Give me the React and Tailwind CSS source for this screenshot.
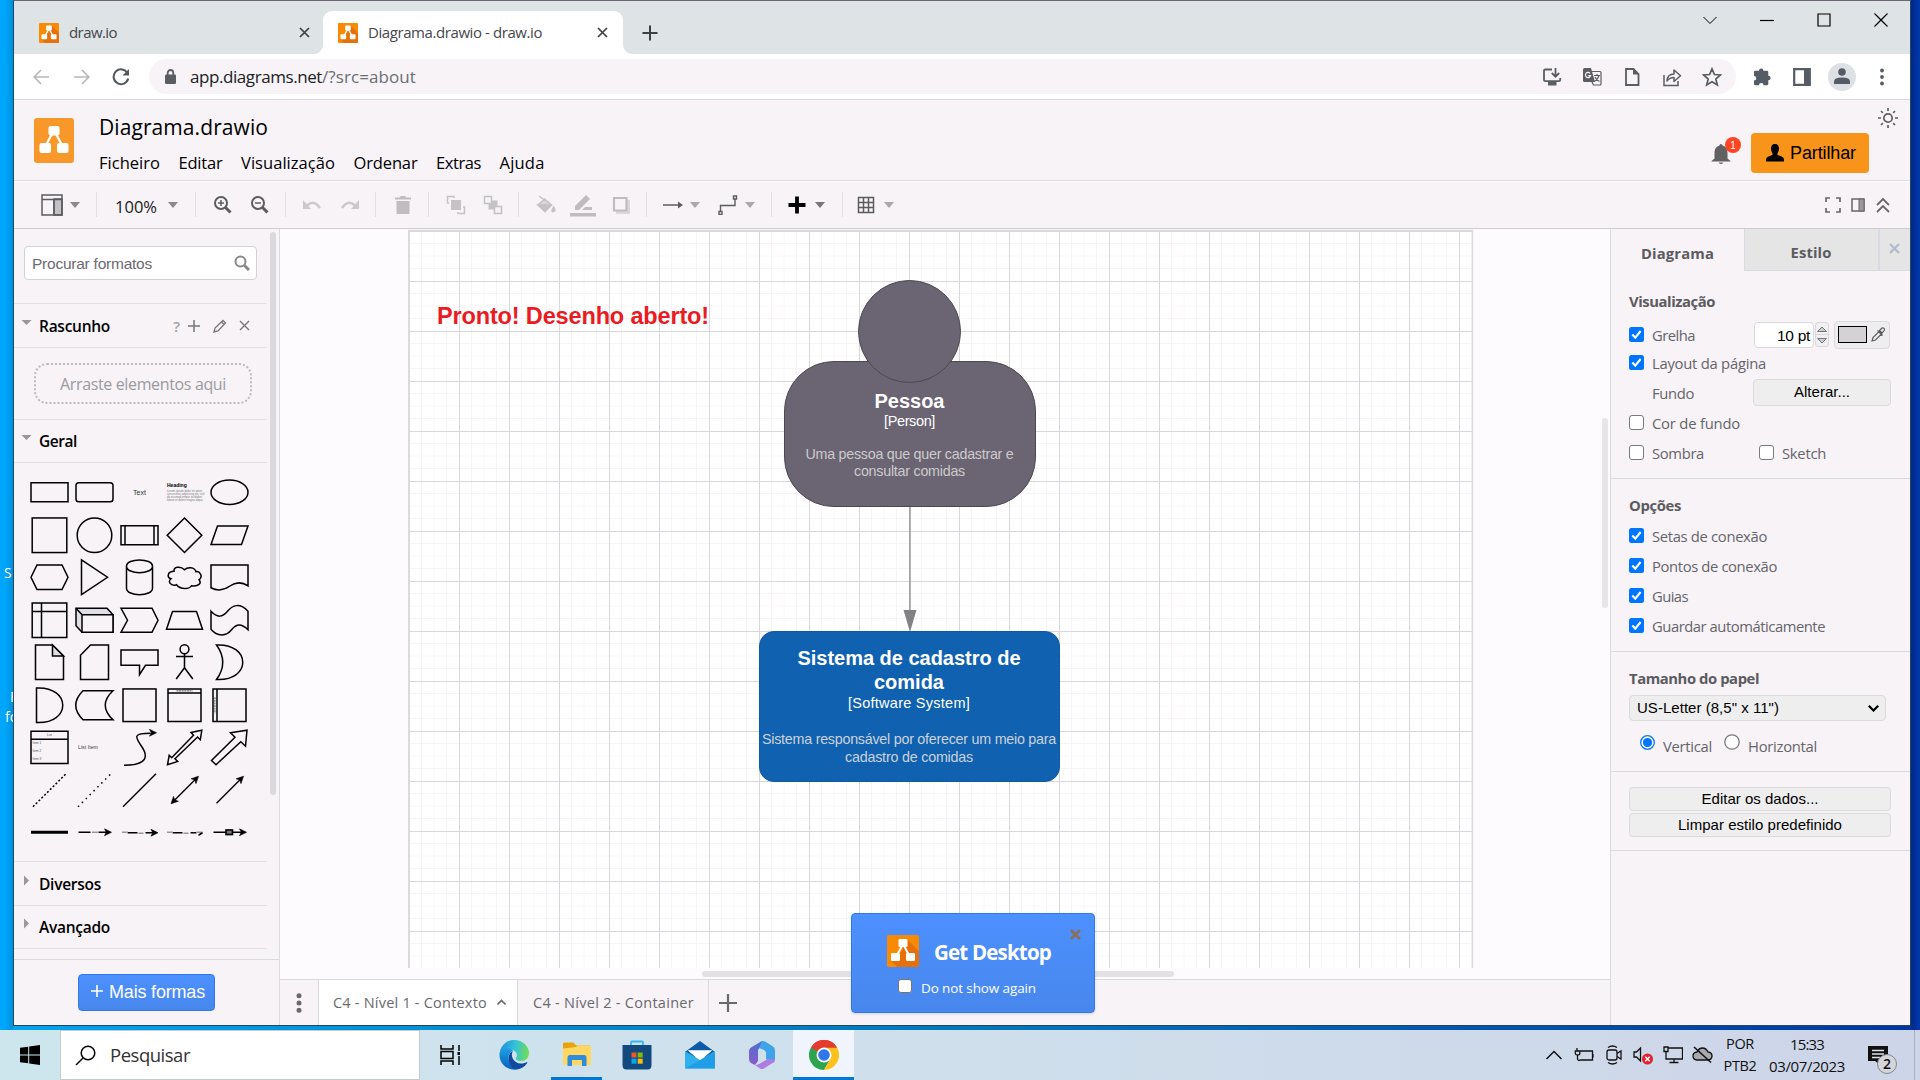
import React, { useLayoutEffect, useRef, useState } from "react";

const UI = "font-['Open_Sans','Noto_Sans',sans-serif]";
const ARIAL = "font-['Liberation_Sans',Arial,sans-serif]";

/* Single-line label whose tracking is adjusted so that it fills a width. */
function Fit({ w, className = "", children }) {
  const ref = useRef(null);
  const [track, setTrack] = useState(0);
  useLayoutEffect(() => {
    const text = ref.current;
    const natural = text.getBoundingClientRect().width - track * children.length;
    setTrack((w - natural) / children.length);
  }, [w, children]);
  return (
    <span className={`block shrink-0 whitespace-nowrap ${className}`} style={{ width: w }}>
      <span ref={ref} style={{ letterSpacing: track }}>{children}</span>
    </span>
  );
}

function Ic({ w = 20, h = 20, className = "", sw = 1.5, children, box }) {
  return (
    <svg width={w} height={h} viewBox={box || `0 0 ${w} ${h}`} fill="none" stroke="currentColor" strokeWidth={sw} className={`block shrink-0 ${className}`}>
      {children}
    </svg>
  );
}

const Caret = ({ className = "" }) => (
  <svg width="10" height="6" viewBox="0 0 10 6" className={`block shrink-0 ${className}`}>
    <path d="M0 0h10l-5 6z" fill="currentColor" />
  </svg>
);

const Sep = ({ className = "" }) => <div className={`h-[25px] w-px shrink-0 bg-[#e2e0e4] ${className}`} />;

function DrawioMark({ size = 20, h, flat = false, className = "" }) {
  return (
    <svg width={size} height={h || size} viewBox={flat ? "0 0 40 45" : "0 0 32 32"} className={`block shrink-0 ${className}`}>
      {flat ? (
        <g>
          <rect width="40" height="45" rx="3" fill="#f9982a" />
          <path d="M20 12L11 29M20 12l9 17" stroke="#fff" strokeWidth="2.2" />
          <rect x="14.5" y="8" width="11" height="9.5" rx="2" fill="#fff" />
          <rect x="5.5" y="25" width="11.5" height="10" rx="2" fill="#fff" />
          <rect x="23" y="25" width="11.5" height="10" rx="2" fill="#fff" />
        </g>
      ) : (
        <g>
          <rect width="32" height="32" rx="1.5" fill="#f98b04" />
          <path d="M21 5l11 11v14.500q0 1.500-1.500 1.500H10l-6-6 9-8z" fill="#e6700a" />
          <path d="M16 9L9 22M16 9l7 13" stroke="#fff" strokeWidth="2" />
          <rect x="11.500" y="4" width="9" height="8" rx="1.300" fill="#fff" />
          <rect x="4" y="18" width="9" height="8" rx="1.300" fill="#fff" />
          <rect x="19" y="18" width="9" height="8" rx="1.300" fill="#fff" />
        </g>
      )}
    </svg>
  );
}

const XIcon = ({ s = 11, sw = 1.7, className = "" }) => (
  <Ic w={s} h={s} sw={sw} box="0 0 11 11" className={className}><path d="M1 1l9 9M10 1l-9 9" /></Ic>
);

/* ---------- browser chrome ---------- */

function TabStrip() {
  return (
    <div className={`flex h-[53px] shrink-0 bg-[#dee3e6] ${UI}`}>
      <div className="mt-[10px] flex h-[43px] w-[309px] items-center">
        <DrawioMark className="ml-[25px]" />
        <Fit w={48} className="ml-[10px] text-[15px] text-[#45484c]">draw.io</Fit>
        <XIcon className="ml-auto mr-[13px] text-[#3c4043]" />
      </div>
      <div className="relative mt-[10px] flex h-[43px] w-[300px] items-center rounded-t-[9px] bg-white">
        <svg width="9" height="9" className="absolute -left-[9px] bottom-0"><path d="M9 0v9H0a9 9 0 0 0 9-9z" fill="#fff" /></svg>
        <svg width="9" height="9" className="absolute -right-[9px] bottom-0"><path d="M0 0v9h9a9 9 0 0 1-9-9z" fill="#fff" /></svg>
        <DrawioMark className="ml-[15px]" />
        <Fit w={174} className="ml-[10px] text-[15px] text-[#45484c]">Diagrama.drawio - draw.io</Fit>
        <XIcon className="ml-auto mr-[15px] text-[#3c4043]" />
      </div>
      <Ic w={16} h={16} sw={2} className="ml-[19px] mt-[24px] text-[#3c4043]"><path d="M8 .5v15M.5 8h15" /></Ic>
      <div className="ml-auto flex h-[37px] items-center pr-[22px] text-black">
        <Ic w={14} h={14} sw={1}><path d="M.5 4l6.500 6.500L13.500 4" /></Ic>
        <Ic w={14} h={14} sw={1.2} className="ml-[43px]"><path d="M0 7.500h14" /></Ic>
        <Ic w={14} h={14} sw={1.2} className="ml-[43px]"><path d="M1 1h12v12H1z" /></Ic>
        <Ic w={14} h={14} sw={1.2} className="ml-[43px]"><path d="M.5.5l13 13M13.500.5l-13 13" /></Ic>
      </div>
    </div>
  );
}

function AddressBar() {
  return (
    <div className={`flex h-[46px] shrink-0 items-center border-b border-[#d9dade] bg-white ${UI}`}>
      <Ic w={16} h={16} sw={1.700} className="ml-[19px] text-[#b6b8bb]"><path d="M16 8H1.500M8 1L1.200 8 8 15" /></Ic>
      <Ic w={16} h={16} sw={1.700} className="ml-[25px] text-[#b6b8bb]"><path d="M0 8h14.500M8 1l6.800 7L8 15" /></Ic>
      <Ic w={18} h={18} sw={2} className="ml-[22px] text-[#54585d]"><path d="M15.500 5.200A7.400 7.400 0 1 0 16.200 10.500" /><path d="M17 1v6.500h-6.500z" fill="currentColor" stroke="none" /></Ic>
      <div className="ml-[19px] flex h-[35px] w-[1587px] shrink-0 items-center rounded-full bg-[#f7f3f7] text-[#5a5d62]">
        <Ic w={11} h={15} sw={1.800} className="ml-[16px]"><rect x="0" y="5.500" width="11" height="9.500" rx="1.300" fill="currentColor" stroke="none" /><path d="M2.700 6V4a2.800 3 0 0 1 5.600 0v2" /></Ic>
        <div className="ml-[14px] flex pb-px pt-px text-[17px]">
          <Fit w={132} className="text-[#202124]">app.diagrams.net</Fit>
          <Fit w={94} className="text-[#6b6e73]">/?src=about</Fit>
        </div>
        <div className="ml-auto flex items-center gap-[20px] pr-[14px]">
          <Ic w={20} h={20} sw={1.800}><path d="M10 2.500H3.200Q2 2.500 2 3.700V13q0 1.200 1.200 1.200H17q1.200 0 1.200-1.200v-2M13.500 1v8M9.800 6l3.700 3.700L17.200 6" /><path d="M6 15h8.500v3.500H6z" fill="currentColor" stroke="none" /></Ic>
          <Ic w={20} h={20} sw={1.200}>
            <path d="M2.500 1H9l4 14H2.500Q1 15 1 13.500v-11Q1 1 2.500 1z" fill="currentColor" stroke="none" />
            <path d="M9.800 4.500h8.200q1 0 1 1V17q0 1-1 1h-6.500l-1.500-3" />
            <path d="M12 8.500h6M15 7v1.500M17 8.500q-1 4-4.500 6M13 10q1.500 3.500 4.500 4.500" />
            <path d="M8 6.300A2.600 2.600 0 1 0 8.600 8.600H6.300" stroke="#f7f3f7" />
          </Ic>
          <Ic w={20} h={20} sw={1.800}><path d="M4 2h7.500L16.500 7v11H4z" /><path d="M11 2v5.500h5.500z" fill="currentColor" stroke="none" /></Ic>
          <Ic w={20} h={20} sw={1.500}><path d="M2 8v10.500h14V14" /><path d="M5 14c.3-5 3-7 7-7V3l6.500 5.800L12 14.500v-4c-3 0-5 .8-7 3.500z" strokeLinejoin="round" /></Ic>
          <Ic w={20} h={20} sw={1.700}><path d="M10 1.800l2.400 5.700 6.100.5-4.700 4 1.500 6L10 14.700 4.700 18l1.500-6-4.700-4 6.100-.5z" /></Ic>
        </div>
      </div>
      <div className="ml-[16px] flex items-center text-[#565c66]">
        <svg width="20" height="20" viewBox="0 0 20 20" className="block"><path d="M7 3.800a2.200 2.200 0 0 1 4.400 0H15q1.300 0 1.300 1.300v3.600a2.300 2.300 0 0 1 0 4.600V17q0 1.300-1.300 1.300h-3.400a2.300 2.300 0 0 0-4.600 0H3.200Q2 18.300 2 17v-3.400a2.300 2.300 0 0 0 0-4.600V5.100q0-1.300 1.300-1.300z" fill="currentColor" /></svg>
        <Ic w={18} h={18} sw={2.200} className="ml-[21px]"><path d="M1.200 1.200h15.600v15.600H1.200z" /><path d="M11 1h6v16h-6z" fill="currentColor" stroke="none" /></Ic>
        <div className="ml-[17px] flex size-[28px] items-center justify-center rounded-full bg-[#dde1e6]">
          <svg width="16" height="17" className="block"><circle cx="8" cy="4" r="3.800" fill="currentColor" /><path d="M0 16v-2.500q0-4 8-4t8 4V16z" fill="currentColor" /></svg>
        </div>
        <svg width="4" height="18" className="ml-[24px] block"><g fill="currentColor"><circle cx="2" cy="2.500" r="1.900" /><circle cx="2" cy="9" r="1.900" /><circle cx="2" cy="15.500" r="1.900" /></g></svg>
      </div>
    </div>
  );
}

/* ---------- editor header ---------- */

const MENUS = [["Ficheiro", 61], ["Editar", 44], ["Visualização", 94], ["Ordenar", 64], ["Extras", 45], ["Ajuda", 45]];

function EditorHeader() {
  return (
    <div className={`flex h-[82px] shrink-0 border-b border-white shadow-[inset_0_-1px_0_#dadce6] ${UI}`}>
      <DrawioMark flat size={40} h={45} className="ml-[20px] mt-[18px]" />
      <div className="ml-[25px] text-black">
        <Fit w={169} className="mt-[12px] h-[30px] text-[21px] leading-[30px]">Diagrama.drawio</Fit>
        <div className="mt-[8px] flex gap-[18.500px] text-[16.500px] leading-[26px]">
          {MENUS.map(([m, w]) => <Fit key={m} w={w}>{m}</Fit>)}
        </div>
      </div>
      <div className="relative ml-auto mt-[44px] h-[22px] w-[20px]">
        <svg width="20" height="20" viewBox="0 0 20 20" className="block text-[#616161]"><path d="M10 0a1.500 1.500 0 0 1 1.500 1.500Q16.500 3 16.500 8.500v6L19.500 17v.6H.5V17l3-2.500v-6Q3.500 3 8.500 1.500A1.500 1.500 0 0 1 10 0zM7.800 18.500h4.400a2.200 1.500 0 0 1-4.400 0z" fill="currentColor" /></svg>
        <span className={`absolute -top-[7px] left-[14px] flex size-4 items-center justify-center rounded-full bg-[#ff4423] text-[10px] text-white ${ARIAL}`}>1</span>
      </div>
      <button className={`ml-[20px] mt-[33px] flex h-[40px] w-[118px] items-center rounded-[4px] bg-[#f89419] text-black ${ARIAL}`}>
        <svg width="18" height="18" viewBox="0 0 18 18" className="ml-[15px] block"><path d="M9 0c2.800 0 4 2 4 4.500S11.700 9 11.300 10c0 1.200 1.500 1.500 3.700 2.300S18 14 18 16v1.500H0V16c0-2 .8-2.900 3-3.700S6.700 11.200 6.700 10C6.300 9 5 7 5 4.500S6.200 0 9 0z" /></svg>
        <Fit w={66} className="ml-[6px] mt-px text-[18px]">Partilhar</Fit>
      </button>
      <Ic w={22} h={22} sw={1.700} className="ml-[8px] mr-[11px] mt-[7px] text-[#5f5f63]">
        <circle cx="11" cy="11" r="4.200" />
        <path d="M11 1v3M11 18v3M1 11h3M18 11h3M4 4l1.800 1.800M16.200 16.200L18 18M18 4l-1.800 1.800M5.800 16.200L4 18" />
      </Ic>
    </div>
  );
}

function Toolbar() {
  return (
    <div className={`flex h-[47px] shrink-0 items-center border-b border-[#cfcdd2] pb-px text-[#5c5c60] ${UI}`}>
      <Ic w={22} h={24} sw={1.500} className="ml-[27px]"><path d="M13 6h8v16h-8z" fill="#c2c1c5" /><path d="M1 2h20v20H1zM1 6.500h20M13 6.500V22" /></Ic>
      <Caret className="ml-[7px] text-[#8a898d]" />
      <Sep className="ml-[16px]" />
      <Fit w={42} className="ml-[18px] mt-[5px] text-[16.500px] text-[#1a1a1a]">100%</Fit>
      <Caret className="ml-[11px] text-[#8a898d]" />
      <Sep className="ml-[17px]" />
      <Ic sw={2} className="ml-[17px]"><circle cx="8" cy="8" r="6" /><path d="M12.500 12.500l5 5" strokeWidth="3" /><path d="M8 5v6M5 8h6" strokeWidth="1.500" /></Ic>
      <Ic sw={2} className="ml-[17px]"><circle cx="8" cy="8" r="6" /><path d="M12.500 12.500l5 5" strokeWidth="3" /><path d="M5 8h6" strokeWidth="1.500" /></Ic>
      <Sep className="ml-[15px]" />
      <Ic sw={2.500} className="ml-[16px] text-[#cbc9ce]"><path d="M5 10.500Q12 4 18 13" /><path d="M1 5v9h8z" fill="currentColor" stroke="none" /></Ic>
      <Ic sw={2.500} className="ml-[18px] text-[#cbc9ce]"><path d="M15 10.500Q8 4 2 13" /><path d="M19 5v9h-8z" fill="currentColor" stroke="none" /></Ic>
      <Sep className="ml-[15px]" />
      <Ic w={18} className="ml-[18px] text-[#bfbdc2]"><path d="M1 2.500h4.500L7 1h4l1.500 1.500H17v2H1zM2.500 6h13v13h-13z" fill="currentColor" stroke="none" /></Ic>
      <Sep className="ml-[16px]" />
      <Ic sw={1.500} className="ml-[17px] text-[#c4c2c7]"><path d="M5 5h10v10H5z" fill="currentColor" stroke="none" /><path d="M3 8H1.500V1.500H8V3M17 12h1.500v6.500H12V17" /></Ic>
      <Ic sw={1.500} className="ml-[17px] text-[#c4c2c7]"><path d="M5.500 5.500h9v9h-9z" fill="currentColor" stroke="none" /><path d="M1.500 1.500h7v7h-7zM11.500 11.500h7v7h-7z" fill="#f7f3f7" /></Ic>
      <Sep className="ml-[15px]" />
      <Ic sw={1.400} className="ml-[17px] text-[#c4c2c7]"><path d="M2 10h13l-6 6.500z" fill="currentColor" /><path d="M3 1l6 4.500M8.500 4L2 10l7 6.500 6.500-6.500z" fill="currentColor" fillOpacity=".6" /><path d="M17.500 12q3 4 0 4.500t0-4.500z" fill="currentColor" /></Ic>
      <Ic w={26} h={24} className="ml-[14px] text-[#bfbdc2]"><path d="M5 17v-4L16 2l4 4L9 17zM12 17l3-3h7v3z" fill="currentColor" stroke="none" /><path d="M0 20h26v3.500H0z" fill="currentColor" stroke="none" /></Ic>
      <Ic sw={2.200} className="ml-[15px] text-[#bfbdc2]"><path d="M5 5h14v14H5z" fill="#d9d7dc" stroke="none" /><path d="M3 3h12.500v12.500H3z" fill="#f7f3f7" /></Ic>
      <Sep className="ml-[15px]" />
      <Ic sw={1.500} className="ml-[16px]"><path d="M0 10h16" /><path d="M15 6.500l5 3.500-5 3.500z" fill="currentColor" stroke="none" /></Ic>
      <Caret className="ml-[7px] text-[#a9a8ac]" />
      <Ic sw={1.400} className="ml-[18px]"><path d="M2.500 16v-5.500H17V4M1 16.500h3v3H1zM15.500 1h3v3h-3z" /></Ic>
      <Caret className="ml-[7px] text-[#a9a8ac]" />
      <Sep className="ml-[16px]" />
      <Ic w={18} h={18} sw={3.800} className="ml-[16px] text-black"><path d="M9 .5v17M.5 9h17" /></Ic>
      <Caret className="ml-[9px] text-[#77767a]" />
      <Sep className="ml-[17px]" />
      <Ic w={18} h={18} sw={1.500} className="ml-[14px]"><path d="M1.500 1.500h15v15h-15zM1.500 6.500h15M1.500 11.500h15M6.500 1.500v15M11.500 1.500v15" /></Ic>
      <Caret className="ml-[9px] text-[#a9a8ac]" />
      <div className="ml-auto mr-[19px] flex items-center gap-[9px] text-[#68676b]">
        <Ic w={16} h={16} sw={1.700}><path d="M1 5V1h4M11 1h4v4M15 11v4h-4M5 15H1v-4" /></Ic>
        <Ic w={16} h={16} sw={1.500}><path d="M2 2h12v12H2z" /><path d="M9 2h5v12H9z" fill="#99989c" strokeWidth="1" /></Ic>
        <Ic w={16} h={16} sw={1.800}><path d="M2 8l6-6 6 6M2 15l6-6 6 6" /></Ic>
      </div>
    </div>
  );
}

/* ---------- shape palette: each shape is drawn round the centre of its cell ---------- */

const tiny = "font-['Liberation_Sans',Arial,sans-serif]";
const Head = ({ x, y, a = 0 }) => <path d="M0 0l-7-3.400 1.800 3.400-1.800 3.400z" transform={`translate(${x} ${y}) rotate(${a})`} fill="currentColor" strokeWidth=".6" />;

const SHAPES = [
  <rect x="-18.500" y="-9.500" width="37" height="19" />,
  <rect x="-18.500" y="-9.500" width="37" height="19" rx="2.800" />,
  <text x="0" y="2.400" textAnchor="middle" fontSize="7" fill="#333" stroke="none" className={tiny}>Text</text>,
  <g fill="#444" stroke="none" className={tiny}>
    <text x="-17.500" y="-5.500" fontSize="5" fontWeight="bold" fill="#000">Heading</text>
    <text x="-17.500" y="0" fontSize="2.900" opacity=".7">Lorem ipsum dolor sit amet,</text>
    <text x="-17.500" y="3" fontSize="2.700" opacity=".7">consectetur adipisicing elit, sed</text>
    <text x="-17.500" y="6" fontSize="2.700" opacity=".7">do eiusmod tempor incididunt</text>
    <text x="-17.500" y="9" fontSize="2.700" opacity=".7">labore et dolore magna aliqua.</text>
  </g>,
  <ellipse rx="18.500" ry="12.300" />,
  <rect x="-17.300" y="-17.300" width="34.600" height="34.600" />,
  <circle r="17.300" />,
  <path d="M-18.500-9.500h37v19h-37zM-14.500-9.500v19M14.500-9.500v19" />,
  <path d="M0-17.300L17.300 0 0 17.300-17.300 0z" />,
  <path d="M-12-9.300h30.500l-6.500 18.600h-30.500z" />,
  <path d="M-18.500 0l6-12.300h25l6 12.300-6 12.300h-25z" />,
  <path d="M-13-17.300L13 0l-26 17.300z" />,
  <path d="M-13-11v22c0 8.500 26 8.500 26 0v-22c0-8.500-26-8.500-26 0c0 8.500 26 8.500 26 0" />,
  <path d="M-10.500-6C-17-6-18 0-13.500 1.500-18 5 -12 9.500-8 7.500-4 12.500 5 12 7 8.500 14 9.500 17.500 6 14.500 2.500 19-1 15-6.500 11.500-5.500 10-10.500 3-10.500 0-7.500-4-11.500-11-10.500-10.500-6z" />,
  <path d="M-18.500-12.300h37V8.500Q9.250 2.500 0 9T-18.500 10.500z" />,
  <path d="M-17.300-17.300h34.600v34.600h-34.600zM-8-17.300v34.600M-17.300-8.800h34.600" />,
  <g><path d="M-18.500-12h31l6 6.500v17.500H-12.500l-6-6.500z" fill="#dfdee6" /><path d="M-12.500-5.500h31v17.500h-31zM-18.500-12l6 6.500" fill="#f7f3f7" /></g>,
  <path d="M-18.500-12h31l6 12-6 12h-31l6.500-12z" />,
  <path d="M-12-8.800h24l6 17.800h-36z" />,
  <path d="M-18.500-9C-12-2-7-3-2-9S10-18 18.500-9V9.500C12 3 7 3 2 9.500S-12 17-18.500 9z" />,
  <g><path d="M-14-17.300H3l11 11V17.300h-28z" /><path d="M3-17.300v11h11z" fill="#dfdee6" /></g>,
  <path d="M-4-17.300h18v34.600h-28V-7z" />,
  <path d="M-18.500-12.300h37V3H6L0 12.500V3h-18.500z" />,
  <g><circle cy="-13" r="4.400" /><path d="M0-8.600V5.500M-8.500-5.700h17M0 5.500l-8.300 11.200M0 5.500l8.300 11.200" /></g>,
  <path d="M-13-17.300C22-19 22 19-13 17.300Q-0.500 0-13-17.300z" />,
  <path d="M-13-17.300C22-19 22 19-13 17.300z" />,
  <path d="M-11.500-14.500h30q-15.500 14.500 0 29h-30q-14.500-14.500 0-29z" />,
  <rect x="-16.500" y="-16.300" width="33" height="32.600" />,
  <g><path d="M-16.500-16.300h33v32.600h-33zM-16.500-12.300h33" /><path d="M-8-14.400H8" strokeWidth="1" strokeDasharray="2 .6" stroke="#556" /></g>,
  <g><path d="M-16.500-16.300h33v32.600h-33zM-12.500-16.300v32.600" /><path d="M-14.600-8V8" strokeWidth="1" strokeDasharray="2 .6" stroke="#556" /></g>,
  <g><path d="M-18.500-16h37v32.300h-37zM-18.500-8h37" /><g fill="#555" stroke="none" fontSize="3.200" className={tiny}><text x="-2.500" y="-10.800">List</text><text x="-17" y="-3">Item 1</text><text x="-17" y="5">Item 2</text><text x="-17" y="13">Item 3</text></g></g>,
  <text x="-16.500" y="1.500" fontSize="5.300" fill="#444" stroke="none" className={tiny}>List Item</text>,
  <g><path d="M-15.500 18C8 18 9 9 2-1S-6-14 11-14" /><Head x={17} y={-14.5} /></g>,
  <path d="M17.300-17l-1.500 9.500-2.700-2.700L-9.500 11.500l2.700 2.700L-17 17.500l1.700-9.500 2.500 2.500L9-12 6.500-14.700z" />,
  <path d="M17.500-17l-1.500 16-4.700-4.500L-13.500 17.500l-4.500-4.300L5.500-10 1-14.500z" />,
  <path d="M-16.500 16.500L16.500-16.500" strokeDasharray="2 2" />,
  <path d="M-16.500 16.500L16.500-16.500" strokeDasharray="1.500 4" />,
  <path d="M-16.500 16.500L16.500-16.500" />,
  <g><path d="M-11 11L11-11" /><Head x={14} y={-14} a={-45} /><Head x={-13.5} y={13.5} a={135} /></g>,
  <g><path d="M-13 13L11-11" /><Head x={14} y={-14} a={-45} /></g>,
  <path d="M-18.500 0h37" strokeWidth="3.200" />,
  <g><path d="M-16 0h12M4 0h10" /><path d="M-2.500 0h6" stroke="#999" /><Head x={17} y={0} /></g>,
  <g><path d="M-12 .5h10M6 .5h8" /><path d="M-17.500 0h6M-1 1h5" stroke="#999" /><Head x={18.5} y={0.5} /></g>,
  <g><path d="M-12 .5h10M6 .5h6" /><path d="M-17.500 0h6M-1 1h5M12 0h6" stroke="#999" /><path d="M14 3l4-2.500" /></g>,
  <g><path d="M-16 0h30" /><rect x="-3.500" y="-2.300" width="6.500" height="4.600" fill="#777" strokeWidth="1.600" /><Head x={17} y={0} /></g>,
];

const Fold = ({ open }) => (
  <svg width="11" height="11" viewBox="0 0 11 11" className="-mt-[7px] ml-[7px] block shrink-0">
    {open ? <path d="M.5 3h10l-5 5z" fill="#98979b" /> : <path d="M3 .5l5 5-5 5z" fill="#98979b" />}
  </svg>
);

function Section({ title, w, h, open, children }) {
  return (
    <div className={`flex w-[253px] shrink-0 items-center border-t border-[#e2e0e4] text-black ${h}`}>
      <Fold open={open} />
      <Fit w={w} className="ml-[7px] mt-[2px] text-[15.500px] font-semibold">{title}</Fit>
      {children}
    </div>
  );
}

function Palette() {
  return (
    <div className={`flex w-[266px] shrink-0 flex-col border-r border-[#d9dbe2] ${UI}`}>
      <div className="flex h-[730px]">
        <div className="w-[253px]">
          <div className={`ml-[10px] mt-[17px] flex h-[34px] w-[233px] items-center rounded-[4px] border border-[#d3d1d6] bg-white text-[#6b6b70] ${ARIAL}`}>
            <Fit w={120} className="ml-[7px] mt-px text-[15.500px]">Procurar formatos</Fit>
            <Ic w={16} h={16} sw={2} className="ml-auto mr-[6px] text-[#88878b]"><circle cx="6.500" cy="6.500" r="5" /><path d="M10.500 10.500l4.500 4.500" strokeWidth="3" /></Ic>
          </div>
          <div className="mt-[23px]" />
          <Section title="Rascunho" w={71} h="h-[44px]" open>
            <div className="ml-auto mr-[17px] flex items-center text-[#77777b]">
              <span className="mr-[8px] text-[15px] font-semibold leading-4 text-[#a3a2a6]">?</span>
              <Ic w={12} h={12} sw={1.500}><path d="M6 0v12M0 6h12" /></Ic>
              <Ic w={14} h={14} sw={1.300} className="ml-[13px]"><path d="M1 13l1-4L10 1.500 12.500 4 5 12zM8.500 3L11 5.500" /></Ic>
              <XIcon s={11} sw={1.400} className="ml-[12px]" />
            </div>
          </Section>
          <div className="flex h-[72px] w-[253px] border-t border-[#e2e0e4] pl-[20px] pt-[15px]">
            <div className="flex h-[41px] w-[218px] items-center justify-center rounded-[13px] border-2 border-dotted border-[#bdbbc0]">
              <Fit w={166} className="mt-px text-[16px] text-[#9c9a9f]">Arraste elementos aqui</Fit>
            </div>
          </div>
          <Section title="Geral" w={38} h="h-[43px]" open />
          <div className="grid h-[399px] w-[253px] grid-cols-[repeat(5,45px)] grid-rows-[repeat(9,42.5px)] border-t border-[#e2e0e4] pl-[13px] pt-[8px]">
            {SHAPES.map((s, i) => (
              <svg key={i} width="45" height="42.5" viewBox="-22.5 -21.25 45 42.5" fill="none" stroke="currentColor" strokeWidth="1.500" className="block text-black">{s}</svg>
            ))}
          </div>
          <Section title="Diversos" w={62} h="h-[44px]" />
          <Section title="Avançado" w={71} h="h-[43px]" />
          <div className="w-[253px] border-t border-[#e2e0e4]" />
        </div>
        <div className="ml-[3px] mt-[3px] h-[563px] w-[6px] rounded-full bg-[#dbd9dd]" />
      </div>
      <div className="flex flex-1 border-t border-[#d9dbe2]">
        <button className={`ml-[64px] mt-[14px] flex h-[37px] w-[137px] items-center rounded-[4px] border border-[#3079ed] bg-gradient-to-b from-[#4d90fe] to-[#4787ed] text-white ${ARIAL}`}>
          <Ic w={12} h={12} sw={1.600} className="-mt-[3px] ml-[12px]"><path d="M6 0v12M0 6h12" /></Ic>
          <Fit w={96} className="-mt-px ml-[6px] text-[18px]">Mais formas</Fit>
        </button>
      </div>
    </div>
  );
}

/* ---------- canvas ---------- */

const Line = ({ w, children, className = "" }) => <Fit w={w} className={`mx-auto ${className}`}>{children}</Fit>;

function Canvas() {
  return (
    <div className={`relative h-[750px] overflow-hidden bg-[#fefbfe] ${ARIAL}`}>
      <svg width="1066" height="739" className="absolute left-[128px] top-0 block">
        <defs>
          <pattern id="grid" x="1" y="2" width="50" height="50" patternUnits="userSpaceOnUse">
            <path d="M12.500.5V50M37.500.5V50M.5 12.500H50M.5 37.500H50" stroke="#f6f4f6" fill="none" />
            <path d="M25 .5V50M.5 25H50" stroke="#faf7f9" fill="none" />
            <path d="M.5 0v50M0 .5h50" stroke="#d8d7d9" fill="none" />
          </pattern>
        </defs>
        <rect x="0" y="1" width="1065" height="760" fill="#fff" />
        <rect x="1" y="2" width="1063" height="760" fill="url(#grid)" />
        <path d="M.5 739V1.500h1064V739" stroke="#dcdadd" strokeWidth="1.500" fill="none" />
      </svg>
      <div className="absolute left-[157px] top-[73px] text-[23.500px] font-bold leading-[28px] text-[#ea1b23]">
        <Fit w={272}>Pronto! Desenho aberto!</Fit>
      </div>
      <div className="absolute left-[504px] top-[132px] h-[146px] w-[252px] rounded-[50px] border-[1.500px] border-[#4c494f] bg-[#6b6472] pr-px pt-[28px] text-center text-white">
        <Line w={70} className="h-[23px] text-[20px] font-bold leading-[23px]">Pessoa</Line>
        <Line w={51} className="text-[14.500px] leading-[16px]">[Person]</Line>
        <div className="mt-[17px] text-[14.300px] leading-[17px] text-[#cccacd]">
          <Line w={208}>Uma pessoa que quer cadastrar e</Line>
          <Line w={111}>consultar comidas</Line>
        </div>
      </div>
      <div className="absolute left-[578px] top-[51px] size-[103px] rounded-full border-[1.500px] border-[#4c494f] bg-[#6b6472]" />
      <svg width="16" height="126" className="absolute left-[622px] top-[278px] block"><path d="M8 0v106" stroke="#8a898b" strokeWidth="1.300" /><path d="M1.500 103h13L8 125z" fill="#828183" /></svg>
      <div className="absolute left-[479px] top-[402px] h-[151px] w-[301px] rounded-[15px] border border-[#0f5aa4] bg-[#1061b0] pr-px pt-[14px] text-white">
        <div className="text-[20px] font-bold leading-[24px]">
          <Line w={223}>Sistema de cadastro de</Line>
          <Line w={70}>comida</Line>
        </div>
        <Line w={122} className="mt-px text-[14.500px] leading-[16px]">[Software System]</Line>
        <div className="mt-[19px] text-[14.300px] leading-[18px] text-[#cbd2dc]">
          <Line w={294}>Sistema responsável por oferecer um meio para</Line>
          <Line w={128}>cadastro de comidas</Line>
        </div>
      </div>
      <div className="absolute left-[1322px] top-[189px] h-[190px] w-[6px] rounded-full bg-[#e8e5e9]" />
      <div className="absolute left-[422px] top-[742px] h-[6px] w-[472px] rounded-full bg-[#e3e1e4]" />
    </div>
  );
}

function PageTabs() {
  return (
    <div className={`flex h-[46px] items-center border-t border-[#d9d8dc] text-[#6a696d] ${UI}`}>
      <div className="flex h-full w-[39px] items-center justify-center border-r border-[#d9d8dc]">
        <svg width="6" height="20"><g fill="currentColor"><circle cx="3" cy="2.700" r="2.500" /><circle cx="3" cy="10" r="2.500" /><circle cx="3" cy="17.300" r="2.500" /></g></svg>
      </div>
      <div className="flex h-full w-[199px] items-center border-r border-[#d9d8dc] bg-white">
        <Fit w={154} className="ml-[14px] text-[14.500px]">C4 - Nível 1 - Contexto</Fit>
        <Ic w={9} h={6} sw={1.600} className="-mt-[2px] ml-[10px]"><path d="M.5 5.500l4-4 4 4" /></Ic>
      </div>
      <div className="flex h-full w-[191px] items-center border-r border-[#d9d8dc]">
        <Fit w={161} className="ml-[15px] text-[14.500px]">C4 - Nível 2 - Container</Fit>
      </div>
      <Ic w={18} h={18} sw={2.200} className="ml-[10px]"><path d="M9 0v18M0 9h18" /></Ic>
    </div>
  );
}

function DesktopPopup() {
  return (
    <div className={`absolute left-[571px] top-[684px] flex h-[100px] w-[244px] flex-col rounded-[4px] border border-[#3079ed] bg-gradient-to-b from-[#4d90fe] to-[#4787ed] text-white shadow ${UI}`}>
      <div className="flex h-[60px] pl-[35px] pt-[21px]">
        <DrawioMark size={32} />
        <Fit w={117} className="ml-[15px] mt-[3px] text-[20.500px] font-bold leading-[28px]">Get Desktop</Fit>
        <Ic w={11} h={11} sw={2.600} className="ml-[19px] -mt-[6px] text-[#8a6e55]"><path d="M1 1l9 9M10 1l-9 9" /></Ic>
      </div>
      <div className="flex items-start pl-[46px]">
        <span className="mt-[5px] size-[14px] rounded-[3px] border border-[#767676] bg-white" />
        <Fit w={115} className="ml-[9px] mt-[4px] text-[13.500px] leading-[20px]">Do not show again</Fit>
      </div>
    </div>
  );
}

/* ---------- format panel ---------- */

const Check = ({ on }) => on ? (
  <svg width="15" height="15" className="-mt-px block shrink-0"><rect width="15" height="15" rx="2.500" fill="#0075ff" /><path d="M3.300 7.600l3 3 5.300-6.600" stroke="#fff" strokeWidth="2.100" fill="none" /></svg>
) : <span className="-mt-[2px] block size-[15px] shrink-0 rounded-[3px] border-[1.500px] border-[#7a797d] bg-white" />;

const Opt = ({ on, w, h = "h-[30px]", children }) => (
  <div className={`flex items-center ${h}`}>
    <Check on={on} />
    <Fit w={w} className="ml-[8px] mt-px">{children}</Fit>
  </div>
);

const Title = ({ w, className = "", children }) => <Fit w={w} className={`font-bold leading-[20px] text-[#5c5b60] ${className}`}>{children}</Fit>;

const btn = `flex items-center justify-center rounded-[4px] border border-[#dbdadd] bg-[#eeeeee] text-[15px] text-black ${ARIAL}`;

function FormatPanel() {
  return (
    <div className={`flex w-[300px] shrink-0 flex-col border-l border-[#d9dbe2] text-[14.800px] text-[#66656a] ${UI}`}>
      <div className="flex h-[42px] shrink-0">
        <div className="flex w-[133px] items-center pl-[30px] pt-[5px]"><Title w={73}>Diagrama</Title></div>
        <div className="flex w-[134px] items-center justify-center border-b border-l border-[#d9dbe2] bg-[#e5e5e6] pr-px pt-[4px]"><Title w={41}>Estilo</Title></div>
        <div className="flex flex-1 items-center justify-center border-b border-l-2 border-[#d9dbe2] bg-[#e5e5e6] pb-[3px] pr-[2px] text-[#b1bccb]"><XIcon s={11} sw={2.400} /></div>
      </div>
      <div className="h-[208px] shrink-0 border-b border-[#d9dbe2] pl-[18px] pt-[20px]">
        <Title w={86}>Visualização</Title>
        <div className="mt-[9px] flex h-[30px] items-center">
          <Opt on w={43}>Grelha</Opt>
          <div className={`ml-[59px] flex h-[26px] w-[60px] items-center justify-end rounded-[4px] border border-[#d9d8dc] bg-white pr-[3px] text-[15.500px] text-black ${ARIAL}`}><Fit w={33} className="mt-px">10 pt</Fit></div>
          <div className="-mt-px ml-px flex h-[25px] w-[14px] flex-col items-center rounded-[3px] border border-[#d9d8dc] bg-[#f1eff2]">
            <span className="flex h-[12px] items-center border-b border-[#d9d8dc]"><svg width="12" height="6"><path d="M1.500 5.500h9L6 1z" fill="#ccc" stroke="#777" /></svg></span>
            <span className="flex h-[11px] items-center"><svg width="12" height="6"><path d="M1.500.5h9L6 5z" fill="#ccc" stroke="#777" /></svg></span>
          </div>
          <div className="-mt-px ml-[5px] flex h-[28px] w-[56px] items-center rounded-[4px] border border-[#dbdadd] bg-[#eeeeee] pl-[3px]">
            <span className="h-[17px] w-[29px] border border-black bg-[#d4d2d5]" />
            <Ic w={14} h={15} sw={1.200} className="ml-[4px] text-[#5c5c60]"><path d="M1 14l1-3.500L8 4.500l2.500 2.500-6 6zM6.500 3.500l5 5M8.500 3.500l2.500-2.500q1.200-.5 2 .3t.3 2L11 6z" /></Ic>
          </div>
        </div>
        <Opt on w={114} h="h-[26px]">Layout da página</Opt>
        <div className="flex h-[32px] items-center">
          <Fit w={42} className="ml-[23px] mt-[3px]">Fundo</Fit>
          <div className={`ml-[59px] h-[27px] w-[138px] ${btn}`}><Fit w={56} className="mt-px">Alterar...</Fit></div>
        </div>
        <Opt w={88}>Cor de fundo</Opt>
        <div className="flex">
          <Opt w={52}>Sombra</Opt>
          <div className="w-[55px]" />
          <Opt w={44}>Sketch</Opt>
        </div>
      </div>
      <div className="h-[173px] shrink-0 border-b border-[#d9dbe2] pl-[18px] pt-[16px]">
        <Title w={52} className="mb-[6px]">Opções</Title>
        <Opt on w={115}>Setas de conexão</Opt>
        <Opt on w={125}>Pontos de conexão</Opt>
        <Opt on w={36}>Guias</Opt>
        <Opt on w={173}>Guardar automáticamente</Opt>
      </div>
      <div className="h-[120px] shrink-0 border-b border-[#d9dbe2] pl-[18px] pt-[16px]">
        <Title w={130}>Tamanho do papel</Title>
        <div className={`mt-[7px] flex h-[26px] w-[257px] items-center rounded-[4px] border border-[#dbdadd] bg-[#eeeeee] pl-[7px] text-[15px] text-black ${ARIAL}`}>
          <Fit w={142}>US-Letter (8,5" x 11")</Fit>
          <Ic w={11} h={7} sw={2.200} className="ml-auto mr-[6px]"><path d="M.8.8l4.700 4.700L10.200.8" /></Ic>
        </div>
        <div className="mt-[9px] flex h-[30px] items-center pl-[11px]">
          <svg width="15" height="15" className="-mt-[6px]"><circle cx="7.500" cy="7.500" r="6.800" fill="#fff" stroke="#0075ff" strokeWidth="1.300" /><circle cx="7.500" cy="7.500" r="4.600" fill="#0075ff" /></svg>
          <Fit w={49} className="ml-[8px] mt-[2px]">Vertical</Fit>
          <svg width="16" height="16" className="-mt-[6px] ml-[12px]"><circle cx="8" cy="8" r="7.200" fill="#fff" stroke="#7a797d" strokeWidth="1.300" /></svg>
          <Fit w={69} className="ml-[8px] mt-[2px]">Horizontal</Fit>
        </div>
      </div>
      <div className="h-[79px] shrink-0 border-b border-[#d9dbe2] pl-[18px] pt-[15px]">
        <div className={`h-[24px] w-[262px] ${btn}`}><Fit w={117}>Editar os dados...</Fit></div>
        <div className={`mt-[2px] h-[24px] w-[262px] ${btn}`}><Fit w={164} className="mt-px">Limpar estilo predefinido</Fit></div>
      </div>
    </div>
  );
}

/* ---------- taskbar ---------- */

function Taskbar() {
  return (
    <div className={`flex h-[50px] shrink-0 items-center bg-gradient-to-r from-[#cde6ee] via-[#cfdfec] to-[#cdd5e8] text-black ${UI}`}>
      <svg width="20" height="20" viewBox="0 0 20 20" className="ml-[20px] block shrink-0"><path d="M0 2.800L8.200 1.700v7.800H0zM9.200 1.500L20 0v9.500H9.200zM0 10.500h8.200v7.800L0 17.200zM9.200 10.500H20V20L9.200 18.500z" /></svg>
      <div className="ml-[20px] flex h-[50px] w-[360px] items-center border border-[#c6cbce] bg-white">
        <Ic w={21} h={21} sw={1.500} className="ml-[14px]"><circle cx="13" cy="8" r="6.800" /><path d="M8 13L1 20" /></Ic>
        <Fit w={80} className="ml-[14px] text-[18.500px] text-[#333]">Pesquisar</Fit>
      </div>
      <Ic w={20} h={20} sw={1.500} className="ml-[20px]"><path d="M1 0v4h12V0M1 20v-4h12v4M1 6.500h12v7H1zM19 0v6M19 11v9" /><path d="M17.500 7h3v3h-3z" fill="currentColor" stroke="none" /></Ic>
      <svg width="30" height="30" viewBox="0 0 30 30" className="ml-[39px] block">
        <defs>
          <linearGradient id="e1" x1="0" x2="1" y1=".2" y2=".3"><stop stopColor="#1c8fe0" /><stop offset=".55" stopColor="#34c3d8" /><stop offset="1" stopColor="#6fdc54" /></linearGradient>
          <linearGradient id="e2" x1="0" x2="0" y1="0" y2="1"><stop stopColor="#1b9de2" /><stop offset="1" stopColor="#0a5fc0" /></linearGradient>
        </defs>
        <path d="M.8 12C3 3 10 0 15 0c9 0 15 6.500 15 13 0 5-3.500 8-8 8-4 0-6-1.500-5-3 1.500-2.500 1.500-5-1.500-7S5 8 .8 12z" fill="url(#e1)" />
        <path d="M.8 12c3.500-4.500 10-4 13.200-1.500-3 1-5 4.500-4.500 8.500.6 5 4.500 9 9.500 10.200C8 32-1.500 22 .8 12z" fill="url(#e2)" />
        <path d="M9.500 18c0-3 1.500-6 4.500-7-3 4 0 12.500 8 12.500 2.500 0 4.500-.8 5.500-1.300.8-.3 1 .3.500 1-3 4.500-8 6.500-11 6C12 28.500 9.500 22.500 9.500 18z" fill="#104a9e" />
      </svg>
      <div className="ml-[22px] flex h-[50px] w-[51px] flex-col items-center border-b-[3px] border-[#0078d7] pt-[12px]">
        <svg width="28" height="25" viewBox="0 0 28 25"><path d="M0 2q0-1.500 1.500-1.500h9L13 3.500h13.500Q28 3.500 28 5v4H0z" fill="#e9a20b" /><path d="M0 6.500L13 5l2-1.500h13V23H0z" fill="#ffd763" /><path d="M4.500 24v-8.500q0-2.500 2.500-2.500h14q2.500 0 2.500 2.500V24H19v-6H9v6z" fill="#2f8cdb" /></svg>
      </div>
      <svg width="30" height="30" viewBox="0 0 30 30" className="ml-[20px] block"><path d="M9 6V2.500Q9 1.500 10 1.500h10q1 0 1 1V6" stroke="#35b7ee" strokeWidth="1.800" fill="none" /><path d="M.5 5h29v20q0 4.500-4 4.500h-21q-4 0-4-4.500z" fill="#124a7e" /><path d="M9.500 12.500h5v5h-5z" fill="#f35325" /><path d="M15.700 12.500h5v5h-5z" fill="#81bc06" /><path d="M9.500 18.700h5v5h-5z" fill="#05a6f0" /><path d="M15.700 18.700h5v5h-5z" fill="#ffba08" /></svg>
      <svg width="30" height="30" viewBox="0 0 30 30" className="ml-[33px] block"><path d="M0 12L15 1l15 11v5H0z" fill="#0d5ba8" /><path d="M3 10.500h24L15 21z" fill="#fff" /><path d="M0 11l15 9 15-9v17.500H0z" fill="#2fb1ee" /><path d="M3 10.500h24l-12 9z" fill="#fff" /><path d="M0 28.500L30 12v16.500z" fill="#1c98e4" opacity=".8" /></svg>
      <svg width="28" height="30" viewBox="0 0 28 30" className="ml-[33px] block">
        <defs><linearGradient id="m1" x1="0" y1="0" x2="0" y2="1"><stop stopColor="#4f6fd0" /><stop offset="1" stopColor="#8a5cc8" /></linearGradient></defs>
        <path d="M14 1L3 7.500Q1 8.700 1 11v8q0 3 2.500 4.300L7 25l3-4V11q0-2 1.500-3l6.500-4z" fill="url(#m1)" />
        <path d="M14 1q2-.3 4 1l7 4.500q2 1.200 2 4V19q0 3-2.500 4L18 19v-6q0-2-2-3l-5-2z" fill="#3fa4ea" />
        <path d="M7 25l5 3.500q2 1 4 0l8.500-5.500q2.500-1.500 2.500-4l-8 .5L12 23.500Q9 25 7 25z" fill="#b07be0" />
      </svg>
      <div className="ml-[17px] flex h-[50px] w-[61px] flex-col items-center border-b-[3px] border-[#0078d7] bg-[#f0f4fc] pt-[10px]">
        <svg width="30" height="30" viewBox="0 0 30 30"><circle cx="15" cy="15" r="15" fill="#fff" /><path d="M15 15L2 7.500A15 15 0 0 1 28 7.500z" fill="#e33b2e" /><path d="M2 7.500A15 15 0 0 0 15 30l6.500-11.300L15 15z" fill="#2da44e" /><path d="M28 7.500A15 15 0 0 1 15 30l6.500-11.200L15 7.500z" fill="#fcc21b" /><path d="M2 7.500L8.500 18.700 15 15z" fill="#2da44e" /><path d="M2 7.500Q6 0 15 0t13 7.500H15L8.500 11.200z" fill="#e33b2e" /><circle cx="15" cy="15" r="7.500" fill="#fff" /><circle cx="15" cy="15" r="5.800" fill="#2f78ea" /></svg>
      </div>
      <div className="ml-auto flex items-center text-[#111]">
        <Ic w={16} h={10} sw={1.500}><path d="M.5 9L8 1.500 15.500 9" /></Ic>
        <Ic w={20} h={16} sw={1.300} className="ml-[12px]"><path d="M6 4h12.500v9H5.500M19 7v3.500M3 1v3M1.300 4h4.500v2.500q0 1.500-2.200 1.500T1.300 6.500zM3.500 8v4q0 1.500 2 1.500" /></Ic>
        <Ic w={16} h={20} sw={1.300} className="ml-[12px]"><rect x="1" y="5" width="10" height="10" rx="2" /><path d="M11 8.500l4-2.500v8l-4-2.500M2 2.500q4.500-3 9 0M2 17.500q4.500 3 9 0" /></Ic>
        <Ic w={21} h={20} sw={1.300} className="ml-[11px]"><path d="M1 7h2.500L7.500 3v13l-4-4H1z" /><circle cx="14.500" cy="14" r="5.500" fill="#e0242f" stroke="none" /><path d="M12.300 11.800l4.400 4.400M16.700 11.800l-4.400 4.400" stroke="#fff" strokeWidth="1.400" /></Ic>
        <Ic w={20} h={18} sw={1.300} className="ml-[9px]"><path d="M5 2h14.500v11H3V7M11 13v3M6.500 16.500h9M1 1h4v4.500H1zM3 5.500V8" /></Ic>
        <Ic w={21} h={18} sw={1.300} className="ml-[9px]"><path d="M5 14q-4-.5-4-4t4-4Q7 2 10.500 2t5.500 4q4 .5 4 4t-4 4z" fill="#a9a9ad" /><path d="M2 1l17 15.500" strokeWidth="1.600" /></Ic>
        <div className="ml-[10px] w-[34px] text-[14.500px] leading-[22px]"><Fit w={28} className="mx-auto">POR</Fit><Fit w={33} className="mx-auto">PTB2</Fit></div>
        <div className="ml-[11px] w-[78px] text-[15px] leading-[22px]"><Fit w={34} className="mx-auto">15:33</Fit><Fit w={76} className="mx-auto">03/07/2023</Fit></div>
        <div className="relative ml-[22px] h-[22px] w-[46px]">
          <svg width="20" height="20" className="absolute left-0 top-[2px] block"><path d="M0 0h20v15h-8v4l-5-4H0z" fill="#111" /><path d="M4 4.500h12M4 8h12M4 11.500h8" stroke="#dfe3ee" strokeWidth="1.400" /></svg>
          <span className="absolute left-[9px] top-[10px] flex size-[20px] items-center justify-center rounded-full border border-[#85868c] bg-[#d5d6dc] text-[14px] font-semibold leading-none">2</span>
        </div>
      </div>
      <div className="mr-[5px] h-[50px] w-px bg-[#a9b0bd]" />
    </div>
  );
}

export default function App() {
  return (
    <div className="flex h-[1080px] w-[1920px] flex-col overflow-hidden bg-gradient-to-r from-[#00a4ee] via-[#0077bd] to-[#0035a2]">
      <div className="flex h-[1030px] shrink-0">
        <div className="w-[13px] shrink-0 overflow-hidden bg-gradient-to-r from-[#00a6fb] from-40% to-[#0090dc] text-[14px] leading-[20px] text-white">
          <div className={`pl-[4px] pt-[563px] ${UI}`}>S</div>
          <div className={`pl-[10px] pt-[104px] ${UI}`}>E</div>
          <div className={`pl-[5px] ${UI}`}>fo</div>
        </div>
        <div className="flex h-[1026px] w-[1898px] shrink-0 flex-col border border-[#24475f] border-t-[#6c6572] bg-[#f7f3f7]">
          <TabStrip />
          <AddressBar />
          <EditorHeader />
          <Toolbar />
          <div className="flex min-h-0 flex-1">
            <Palette />
            <div className="relative flex min-w-0 flex-1 flex-col">
              <Canvas />
              <PageTabs />
              <DesktopPopup />
            </div>
            <FormatPanel />
          </div>
        </div>
        <div className="flex-1 bg-gradient-to-r from-[#00298a] to-[#0038ac]" />
      </div>
      <Taskbar />
    </div>
  );
}
